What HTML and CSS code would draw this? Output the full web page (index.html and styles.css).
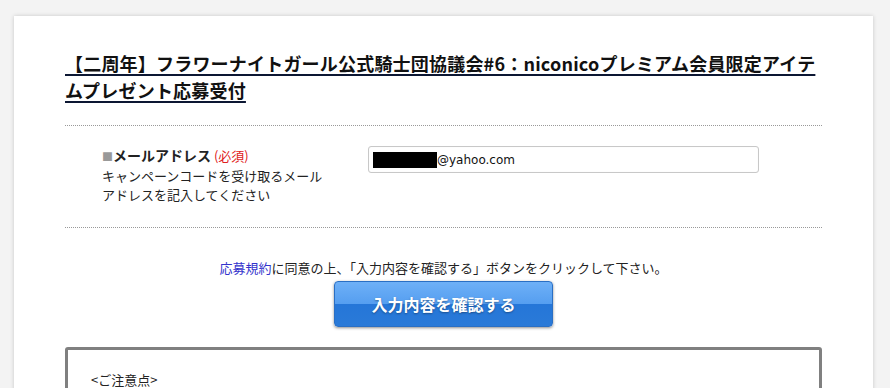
FILE: index.html
```html
<!DOCTYPE html>
<html lang="ja">
<head>
  <meta charset="UTF-8">
  <meta name="viewport" content="width=device-width, initial-scale=1.0">
  <title>応募受付</title>
  <link rel="stylesheet" href="styles.css">
</head>
<body>
  <div class="page">
    <div class="card">
      <h1 class="title">【二周年】フラワーナイトガール公式騎士団協議会#6：niconicoプレミアム会員限定アイテムプレゼント応募受付</h1>
      <form class="entry-form">
        <div class="form-row">
          <div class="form-label">
            <span class="label-name"><span class="mark">■</span>メールアドレス</span>
            <span class="required">(必須)</span><br>
            キャンペーンコードを受け取るメールアドレスを記入してください
          </div>
          <div class="form-field">
            <div class="text-input"><span class="masked"></span>@yahoo.com</div>
          </div>
        </div>
        <p class="agree"><a href="#" class="terms">応募規約</a>に同意の上、「入力内容を確認する」ボタンをクリックして下さい。</p>
        <div class="actions">
          <button type="button" class="btn-confirm">入力内容を確認する</button>
        </div>
      </form>
      <div class="notes">
        <p>&lt;ご注意点&gt;</p>
      </div>
    </div>
  </div>
</body>
</html>
```

FILE: styles.css
```css
body {
    margin: 0;
    padding: 0;
    background: #f3f3f3;
    font-family: "Noto Sans CJK JP", "Noto Sans", sans-serif;
    font-size: 13px;
    color: #222;
    overflow: hidden;
}
.page {
    padding: 16px 17px 0 14px;
}
.card {
    background: #fff;
    box-shadow: 0 0 4px rgba(0, 0, 0, 0.18);
    padding: 34px 51px 40px 51px;
    min-height: 400px;
}
.title {
    margin: 0;
    font-size: 18px;
    line-height: 27px;
    font-weight: bold;
    color: #111;
    text-decoration: underline;
    text-decoration-color: #0c1733;
    text-decoration-thickness: 2px;
    text-underline-offset: 3px;
    letter-spacing: 0.2px;
}
.entry-form {
    margin-top: 21px;
}
.form-row {
    display: flex;
    border-top: 1px dotted #999;
    border-bottom: 1px dotted #999;
    padding: 20px 0 23px 37px;
}
.form-label {
    width: 230px;
    line-height: 19px;
    font-size: 13px;
}
.label-name {
    font-weight: bold;
    font-size: 14px;
}
.mark {
    color: #999;
    font-size: 11px;
}
.required {
    color: #e02020;
}
.form-field {
    margin-left: 36px;
}
.text-input {
    width: 381px;
    height: 25px;
    border: 1px solid #c8c8c8;
    border-radius: 3px;
    box-shadow: inset 0 0 1px rgba(0, 0, 0, 0.1);
    padding: 0 4px;
    display: flex;
    align-items: center;
    font-family: "DejaVu Sans", sans-serif;
    font-size: 12px;
    color: #111;
}
.masked {
    display: inline-block;
    width: 64px;
    height: 16px;
    background: #000;
}
.agree {
    margin: 30px 0 4px;
    text-align: center;
    line-height: 19px;
}
.terms {
    color: #3333cc;
    text-decoration: none;
}
.actions {
    text-align: center;
}
.btn-confirm {
    width: 219px;
    height: 46px;
    border: 1px solid #2a6fc4;
    border-radius: 4px;
    background: linear-gradient(#6eb0f7 0%, #559ef0 50%, #2576d8 50%, #2a7ad8 100%);
    box-shadow: 0 1px 3px rgba(0, 0, 0, 0.45);
    color: #fff;
    font-family: "Noto Sans CJK JP", sans-serif;
    font-size: 16px;
    font-weight: bold;
    text-shadow: 0 1px 2px rgba(0, 0, 0, 0.35);
    cursor: pointer;
}
.notes {
    margin-top: 20px;
    border: 3px solid #808080;
    border-radius: 3px;
    padding: 20px 23px;
}
.notes p {
    margin: 0;
    line-height: 19px;
}
```
